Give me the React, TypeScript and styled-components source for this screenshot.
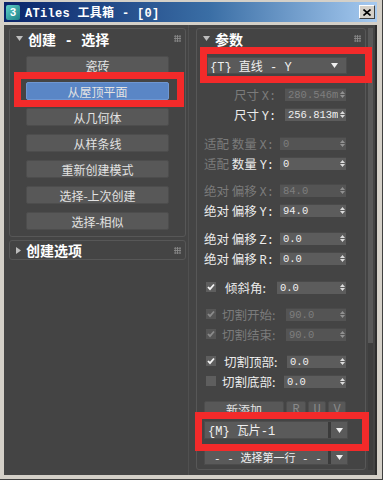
import React from "react";
import styled, { createGlobalStyle } from "styled-components";

const GlobalStyle = createGlobalStyle`
  html, body {
    margin: 0;
    padding: 0;
    background: #d4d0c8;
  }
  body {
    font-family: "Liberation Mono", "Noto Sans CJK SC", monospace;
    font-size: 12px;
  }
`;

// outer window frame
const Window = styled.div`
  position: relative;
  width: 383px;
  height: 480px;
  box-sizing: border-box;
  padding: 2px 5px 4px 4px;
  background: #d4d0c8;
  border-right: 1px solid #404040;
  border-bottom: 1px solid #404040;
  display: flex;
  flex-direction: column;
`;

const TitleBar = styled.div`
  height: 20px;
  flex: none;
  display: flex;
  align-items: center;
  padding: 0 2px 0 2px;
  background: linear-gradient(to right, #0a246a 0%, #3a6ea5 55%, #a6caf0 100%);
`;

const AppIcon = styled.div`
  width: 14px;
  height: 15px;
  border-radius: 2px;
  background: linear-gradient(135deg, #5fd0c8, #1b7f86);
  color: #fff;
  font: bold 11px "Liberation Sans", sans-serif;
  display: flex;
  align-items: center;
  justify-content: center;
`;

const Title = styled.div`
  margin-left: 5px;
  color: #fff;
  font-weight: bold;
  font-size: 12px;
  letter-spacing: 0.3px;
  flex: 1;
  white-space: pre;
`;

const CloseBtn = styled.div`
  width: 16px;
  height: 14px;
  box-sizing: border-box;
  background: #d4d0c8;
  border-top: 1px solid #fff;
  border-left: 1px solid #fff;
  border-right: 1px solid #404040;
  border-bottom: 1px solid #404040;
  display: flex;
  align-items: center;
  justify-content: center;
`;

const Body = styled.div`
  flex: 1;
  margin-top: 3px;
  background: #444444;
  display: flex;
  border-right: 2px solid #2e2e2e;
`;

const LeftColumn = styled.div`
  width: 185px;
  flex: none;
  box-sizing: border-box;
  padding: 3px 0 0 5px;
  border-right: 1px solid #505050;
  display: flex;
  flex-direction: column;
  gap: 3px;
`;

const RightColumn = styled.div`
  flex: 1;
  display: flex;
  padding: 3px 0 5px 7px;
`;

const Rollout = styled.div<{ $width: number }>`
  width: ${({ $width }) => $width}px;
  box-sizing: border-box;
  border: 1px solid #575757;
  border-radius: 3px;
  display: flex;
  flex-direction: column;
`;

const RolloutHeader = styled.div<{ $h?: number }>`
  height: ${({ $h }) => $h ?? 19}px;
  display: flex;
  align-items: center;
  padding: 0 4px 0 6px;
  color: #fff;
  font-weight: bold;
  font-size: 14px;
  font-family: "Liberation Mono", "Noto Sans CJK SC", monospace;
`;

const HeaderTitle = styled.span`
  flex: 1;
  margin-left: 5px;
  white-space: pre;
`;

const Grip = styled.div`
  width: 7px;
  height: 7px;
  background-image: radial-gradient(circle, #8a8a8a 0.8px, transparent 0.9px);
  background-size: 2.4px 2.4px;
`;

const ButtonStack = styled.div`
  display: flex;
  flex-direction: column;
  align-items: center;
  gap: 8px;
  padding: 8px 0 6px 0;
`;

const Button = styled.div<{ $active?: boolean; $w: number; $h?: number; $dim?: boolean }>`
  width: ${({ $w }) => $w}px;
  height: ${({ $h }) => $h ?? 18}px;
  box-sizing: border-box;
  border-radius: 2px;
  background: ${({ $active }) => ($active ? "#5a86c6" : "#585858")};
  border: 1px solid ${({ $active }) => ($active ? "#6f97d2" : "#4d4d4d")};
  color: ${({ $dim }) => ($dim ? "#8a8a8a" : "#e2e2e2")};
  font-family: "Noto Sans CJK SC", sans-serif;
  font-size: 12px;
  display: flex;
  align-items: center;
  justify-content: center;
  white-space: pre;
`;

const Row = styled.div<{ $mt?: number; $indent: number }>`
  height: 20px;
  margin-top: ${({ $mt }) => $mt ?? 0}px;
  display: flex;
  align-items: center;
  padding: 0 19px 0 ${({ $indent }) => $indent}px;
  font-family: "Noto Sans CJK SC", sans-serif;
`;

const Label = styled.span<{ $off?: boolean; $ml?: number }>`
  color: ${({ $off }) => ($off ? "#7b7b7b" : "#ececec")};
  margin-left: ${({ $ml }) => $ml ?? 0}px;
  white-space: pre;
  font-size: 12.5px;
`;

const Latin = styled.span`
  font-family: "Liberation Mono", monospace;
  font-size: 12px;
`;

const Gray = styled.span`
  color: #7b7b7b;
`;

const Field = styled.div<{ $w: number; $off?: boolean }>`
  width: ${({ $w }) => $w}px;
  height: 13px;
  margin-left: auto;
  box-sizing: border-box;
  background: ${({ $off }) => ($off ? "#545454" : "#5c5c5c")};
  border-top: 1px solid #4a4a4a;
  display: flex;
  align-items: center;
  padding-left: 3px;
  color: ${({ $off }) => ($off ? "#7e7e7e" : "#f0f0f0")};
  font-family: "Liberation Mono", monospace;
  font-size: 10.5px;
  overflow: hidden;
`;

const FieldValue = styled.span`
  flex: 1;
  white-space: pre;
  overflow: hidden;
`;

const SpinArrows = styled.div<{ $off?: boolean }>`
  width: 8px;
  flex: none;
  display: flex;
  flex-direction: column;
  align-items: center;
  gap: 1px;
  opacity: ${({ $off }) => ($off ? 0.45 : 1)};
`;

const Check = styled.div<{ $off?: boolean }>`
  width: 10px;
  height: 10px;
  flex: none;
  background: ${({ $off }) => ($off ? "#555" : "#5e5e5e")};
  display: flex;
  align-items: center;
  justify-content: center;
`;

const Dropdown = styled.div<{ $w: number; $h: number; $mt: number; $ml: number; $fs?: number }>`
  width: ${({ $w }) => $w}px;
  height: ${({ $h }) => $h}px;
  margin: ${({ $mt }) => $mt}px 0 0 ${({ $ml }) => $ml}px;
  box-sizing: border-box;
  background: #5a5a5a;
  border: 1px solid #4c4c4c;
  display: flex;
  align-items: center;
  color: #f0f0f0;
  font-family: "Liberation Mono", "Noto Sans CJK SC", monospace;
  font-size: ${({ $fs }) => $fs ?? 12}px;
  overflow: hidden;
`;

const DropText = styled.span<{ $pl: number }>`
  flex: 1;
  padding-left: ${({ $pl }) => $pl}px;
  white-space: pre;
  overflow: hidden;
`;

const DropArrow = styled.div<{ $split?: boolean }>`
  width: 16px;
  height: 100%;
  flex: none;
  display: flex;
  align-items: center;
  justify-content: center;
  border-left: ${({ $split }) => ($split ? "3px solid #3b3b3b" : "none")};
  margin-right: ${({ $split }) => ($split ? 0 : 4)}px;
`;

const ButtonRow = styled.div`
  display: flex;
  gap: 2px;
  margin: 10px 0 0 7px;
`;

const ScrollTrack = styled.div`
  width: 5px;
  flex: none;
  margin-left: 2px;
  background: #3e3e3e;
  display: flex;
  flex-direction: column;
`;

const ScrollThumb = styled.div`
  height: 315px;
  background: #595959;
`;

// red annotation boxes lying over the panel
const Mark = styled.div<{ $x: number; $y: number; $w: number; $h: number }>`
  position: absolute;
  left: ${({ $x }) => $x}px;
  top: ${({ $y }) => $y}px;
  width: ${({ $w }) => $w}px;
  height: ${({ $h }) => $h}px;
  box-sizing: border-box;
  border: 7px solid #f32a2a;
  pointer-events: none;
`;

const TriDown = ({ color = "#bdbdbd" }: { color?: string }) => (
  <svg width="7" height="5" viewBox="0 0 7 5">
    <path d="M0 0 H7 L3.5 5 Z" fill={color} />
  </svg>
);

const TriRight = () => (
  <svg width="5" height="7" viewBox="0 0 5 7">
    <path d="M0 0 V7 L5 3.5 Z" fill="#bdbdbd" />
  </svg>
);

const Spin = ({ off }: { off?: boolean }) => (
  <SpinArrows $off={off}>
    <svg width="5" height="3" viewBox="0 0 5 3">
      <path d="M0 3 L2.5 0 L5 3 Z" fill="#dcdcdc" />
    </svg>
    <svg width="5" height="3" viewBox="0 0 5 3">
      <path d="M0 0 H5 L2.5 3 Z" fill="#dcdcdc" />
    </svg>
  </SpinArrows>
);

const Tick = ({ off }: { off?: boolean }) => (
  <svg width="8" height="8" viewBox="0 0 8 8">
    <path d="M1 4 L3 6.2 L7 1.5" stroke={off ? "#8a8a8a" : "#f4f4f4"} strokeWidth="1.8" fill="none" />
  </svg>
);

type SpinRowProps = {
  mt?: number;
  indent: number;
  w: number;
  value: string;
  off?: boolean;
  children: React.ReactNode;
};

const SpinRow = ({ mt, indent, w, value, off, children }: SpinRowProps) => (
  <Row $mt={mt} $indent={indent}>
    {children}
    <Field $w={w} $off={off}>
      <FieldValue>{value}</FieldValue>
      <Spin off={off} />
    </Field>
  </Row>
);

const createButtons = ["瓷砖", "从屋顶平面", "从几何体", "从样条线", "重新创建模式", "选择-上次创建", "选择-相似"];

export default function App() {
  return (
    <>
      <GlobalStyle />
      <Window>
        <TitleBar>
          <AppIcon>3</AppIcon>
          <Title>ATiles 工具箱 - [0]</Title>
          <CloseBtn>
            <svg width="8" height="7" viewBox="0 0 8 7">
              <path d="M0.5 0.5 L7.5 6.5 M7.5 0.5 L0.5 6.5" stroke="#000" strokeWidth="1.6" />
            </svg>
          </CloseBtn>
        </TitleBar>

        <Body>
          <LeftColumn>
            <Rollout $width={177}>
              <RolloutHeader>
                <TriDown />
                <HeaderTitle>创建 - 选择</HeaderTitle>
                <Grip />
              </RolloutHeader>
              <ButtonStack>
                {createButtons.map((label) => (
                  <Button key={label} $w={143} $active={label === "从屋顶平面"}>
                    {label}
                  </Button>
                ))}
              </ButtonStack>
            </Rollout>
            <Rollout $width={177}>
              <RolloutHeader $h={18}>
                <TriRight />
                <HeaderTitle>创建选项</HeaderTitle>
                <Grip />
              </RolloutHeader>
            </Rollout>
          </LeftColumn>

          <RightColumn>
            <Rollout $width={170}>
              <RolloutHeader>
                <TriDown />
                <HeaderTitle>参数</HeaderTitle>
                <Grip />
              </RolloutHeader>

              <Dropdown $w={140} $h={17} $mt={9} $ml={10}>
                <DropText $pl={2}>{"{T} 直线 - Y"}</DropText>
                <DropArrow>
                  <TriDown color="#f0f0f0" />
                </DropArrow>
              </Dropdown>

              <SpinRow mt={10} indent={37} w={61} value="280.546m" off>
                <Label $off>
                  尺寸 <Latin>X:</Latin>
                </Label>
              </SpinRow>
              <SpinRow indent={37} w={61} value="256.813m">
                <Label>
                  尺寸 <Latin>Y:</Latin>
                </Label>
              </SpinRow>

              <SpinRow mt={9} indent={7} w={66} value="0" off>
                <Label $off>
                  适配 数量 <Latin>X:</Latin>
                </Label>
              </SpinRow>
              <SpinRow indent={7} w={66} value="0">
                <Label>
                  <Gray>适配</Gray> 数量 <Latin>Y:</Latin>
                </Label>
              </SpinRow>

              <SpinRow mt={7} indent={7} w={66} value="84.0" off>
                <Label $off>
                  绝对 偏移 <Latin>X:</Latin>
                </Label>
              </SpinRow>
              <SpinRow indent={7} w={66} value="94.0">
                <Label>
                  绝对 偏移 <Latin>Y:</Latin>
                </Label>
              </SpinRow>

              <SpinRow mt={8} indent={7} w={66} value="0.0">
                <Label>
                  绝对 偏移 <Latin>Z:</Latin>
                </Label>
              </SpinRow>
              <SpinRow indent={7} w={66} value="0.0">
                <Label>
                  绝对 偏移 <Latin>R:</Latin>
                </Label>
              </SpinRow>

              <SpinRow mt={9} indent={9} w={69} value="0.0">
                <Check>
                  <Tick />
                </Check>
                <Label $ml={9}>倾斜角:</Label>
              </SpinRow>

              <SpinRow mt={7} indent={9} w={60} value="90.0" off>
                <Check $off>
                  <Tick off />
                </Check>
                <Label $off $ml={6}>切割开始:</Label>
              </SpinRow>
              <SpinRow indent={9} w={60} value="90.0" off>
                <Check $off>
                  <Tick off />
                </Check>
                <Label $off $ml={6}>切割结束:</Label>
              </SpinRow>

              <SpinRow mt={7} indent={9} w={59} value="0.0">
                <Check>
                  <Tick />
                </Check>
                <Label $ml={8}>切割顶部:</Label>
              </SpinRow>
              <SpinRow indent={9} w={62} value="0.0">
                <Check />
                <Label $ml={6}>切割底部:</Label>
              </SpinRow>

              <ButtonRow>
                <Button $w={80} $h={17}>新添加</Button>
                <Button $w={20} $h={17} $dim>
                  <Latin>R</Latin>
                </Button>
                <Button $w={18} $h={17} $dim>
                  <Latin>U</Latin>
                </Button>
                <Button $w={18} $h={17} $dim>
                  <Latin>V</Latin>
                </Button>
              </ButtonRow>

              <Dropdown $w={144} $h={18} $mt={3} $ml={7}>
                <DropText $pl={3}>{"{M} 瓦片-1"}</DropText>
                <DropArrow $split>
                  <TriDown color="#f0f0f0" />
                </DropArrow>
              </Dropdown>

              <Dropdown $w={144} $h={16} $mt={10} $ml={7} $fs={11}>
                <DropText $pl={9}>{"- - 选择第一行 - -"}</DropText>
                <DropArrow $split>
                  <TriDown color="#f0f0f0" />
                </DropArrow>
              </Dropdown>
            </Rollout>
            <ScrollTrack>
              <ScrollThumb />
            </ScrollTrack>
          </RightColumn>
        </Body>

        <Mark $x={14} $y={72} $w={170} $h={35} />
        <Mark $x={200} $y={47} $w={172} $h={36} />
        <Mark $x={195} $y={412} $w={174} $h={39} />
      </Window>
    </>
  );
}
